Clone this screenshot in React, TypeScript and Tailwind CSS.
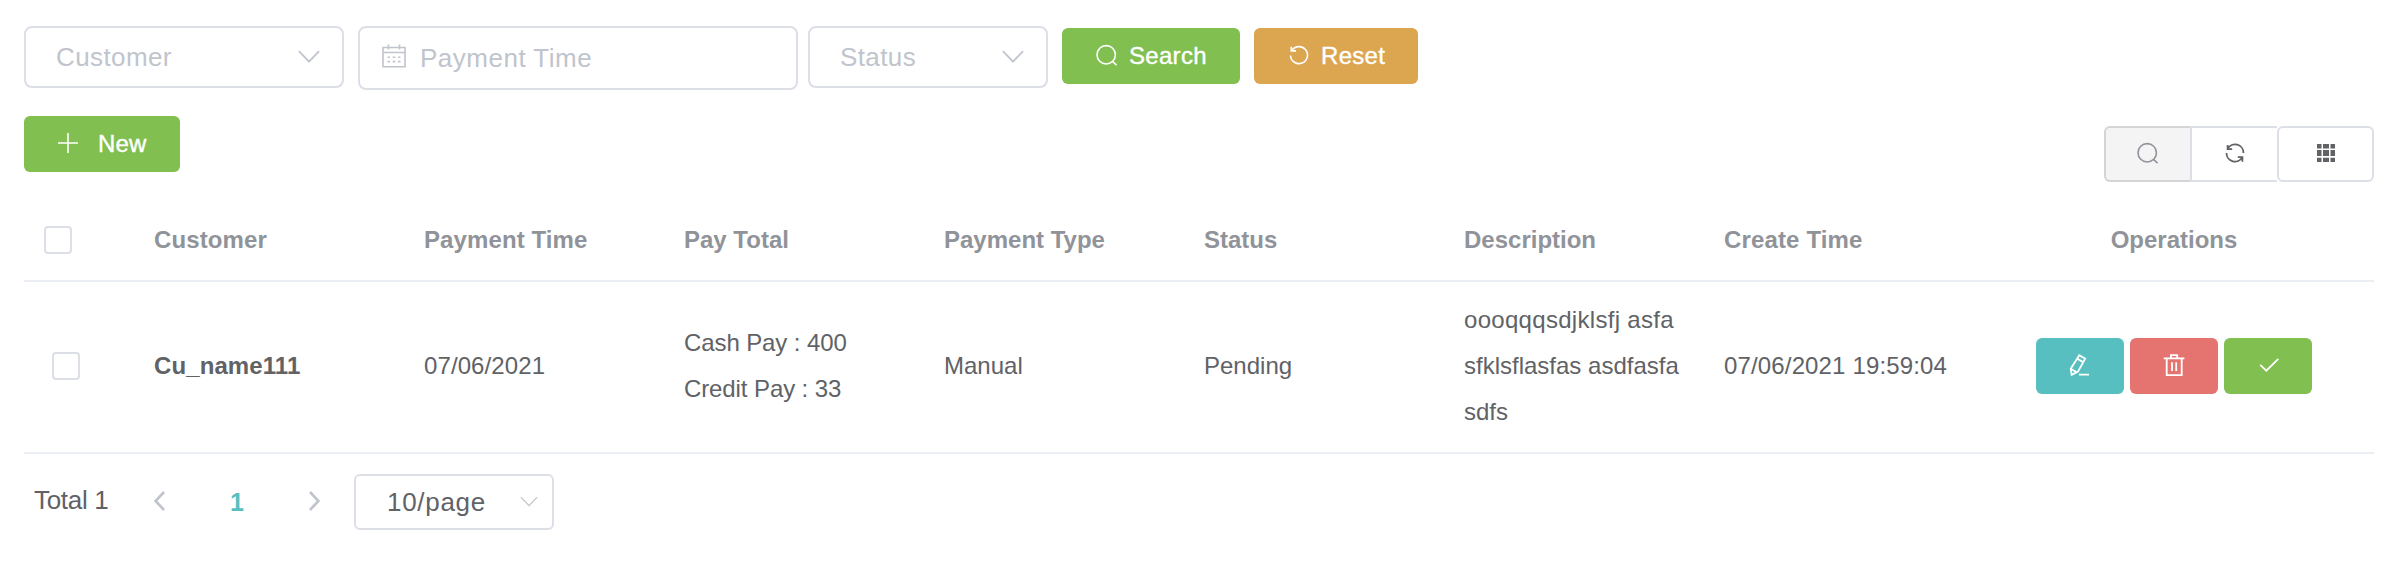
import React from "react";

const Icon = ({ children, size, sw = 1.6, className = "" }: { children: React.ReactNode; size: number; sw?: number; className?: string }) => (
  <svg width={size} height={size} viewBox={`0 0 ${size} ${size}`} fill="none" stroke="currentColor" strokeWidth={sw} className={`shrink-0 overflow-visible ${className}`}>
    {children}
  </svg>
);

const SearchIcon = () => (
  <Icon size={24}>
    <circle cx="11.2" cy="10.8" r="9.2" />
    <path d="M17.4 17.4 21.6 21.2" />
  </Icon>
);

const ChevronDown = ({ w, h, sw }: { w: number; h: number; sw: number }) => (
  <svg width={w} height={h} viewBox="0 0 20 11" fill="none" stroke="currentColor" strokeWidth={sw} strokeLinecap="round" className="-mt-px shrink-0 overflow-visible text-[#c0c4cc]">
    <path d="M0.4 0.6 10 10.6 19.6 0.6" />
  </svg>
);

const Select = ({ label, className }: { label: string; className: string }) => (
  <div className={`flex h-[62px] items-center justify-between rounded-lg border-2 border-[#dcdfe6] pl-[30px] pr-[23px] text-[26px] tracking-[0.4px] text-[#c0c4cc] ${className}`}>
    <span>{label}</span>
    <ChevronDown w={20} h={11} sw={1.8} />
  </div>
);

const Checkbox = ({ className }: { className: string }) => (
  <div className={`size-7 rounded-[4px] border-2 border-[#dcdfe6] bg-white ${className}`} />
);

const medium = "[-webkit-text-stroke:0.4px_currentColor]";
const columns = "grid grid-cols-[110px_270px_260px_260px_260px_260px_260px_260px_1fr] items-center";

export default function App() {
  return (
    <div className="h-[572px] w-[2396px] overflow-hidden bg-white pl-6 pr-[22px] pt-[26px] font-['Liberation_Sans',Arial,sans-serif] text-[24px] text-[#606266]">
      <div className="flex h-[90px] items-start">
        <Select label="Customer" className="w-[320px]" />
        <div className="ml-[14px] flex h-16 w-[440px] items-center rounded-lg border-2 border-[#dcdfe6] pl-[22px] text-[26px] tracking-[0.5px] text-[#c0c4cc]">
          <Icon size={24} sw={1.6} className="-mt-[4px]">
            <path d="M1 3.5H23V22.7H1ZM1 8.5H23M6.5 0.5V5.5M17.5 0.5V5.5" />
            <path d="M5.5 13.3H8M10.7 13.3H13.3M16 13.3H18.5M5.5 17.6H8M10.7 17.6H13.3M16 17.6H18.5" />
          </Icon>
          <span className="ml-[14px]">Payment Time</span>
        </div>
        <Select label="Status" className="ml-[10px] w-[240px]" />
        <button className={`ml-[14px] mt-[2px] flex h-14 w-[178px] items-center rounded-md bg-[#80bf50] pl-[33px] text-white ${medium}`}>
          <SearchIcon />
          <span className="ml-[10px] tracking-[0.3px]">Search</span>
        </button>
        <button className={`ml-[14px] mt-[2px] flex h-14 w-[164px] items-center rounded-md bg-[#dca550] pl-[33px] text-white ${medium}`}>
          <Icon size={24} className="-mt-px">
            <path d="M4.6 6.9A8.5 8.5 0 1 1 3.5 11.5M4.3 2.8V6.9H9" />
          </Icon>
          <span className="ml-[10px] tracking-[0.3px]">Reset</span>
        </button>
      </div>

      <div className="flex h-[84px] items-start justify-between">
        <button className={`flex h-14 w-[156px] items-center rounded-md bg-[#80bf50] pl-[34px] text-white ${medium}`}>
          <Icon size={20} sw={1.6} className="-mt-[2px]">
            <path d="M0 10H20M10 0V20" />
          </Icon>
          <span className="ml-[20px] tracking-[0.2px]">New</span>
        </button>
        <div className="mt-[10px] flex h-14">
          <button className="flex w-[86px] items-center justify-center rounded-l-md border-2 border-r-0 border-[#d3d4d6] bg-[#f4f4f5] text-[#909399]">
            <SearchIcon />
          </button>
          <button className="flex w-[87px] items-center justify-center border-2 border-r-0 border-[#dcdfe6] text-[#606266]">
            <Icon size={20} sw={1.8}>
              <path d="M2.7 4.9A8.4 8.4 0 0 1 18.5 9M17.3 13.1A8.4 8.4 0 0 1 1.5 9M2.6 0.9V5.1H7.2M17.4 17.7V13.1H12.8" />
            </Icon>
          </button>
          <button className="flex w-[97px] items-center justify-center rounded-l-[6px] rounded-r-md border-2 border-[#dcdfe6] text-[#606266]">
            <svg width="18" height="18" viewBox="0 0 18 18" fill="currentColor" className="-mt-[2px]">
              <path d="M0 0h4.5v4.5H0zM6 0h6v4.5H6zM13.5 0h4.5v4.5h-4.5zM0 6.1h4.5v6H0zM6 6.1h6v6H6zM13.5 6.1h4.5v6h-4.5zM0 13.8h4.5v4.2H0zM6 13.8h6v4.2H6zM13.5 13.8h4.5v4.2h-4.5z" />
            </svg>
          </button>
        </div>
      </div>

      <div className={`${columns} h-[82px] border-b-2 border-[#ebeef5] font-bold text-[#909399]`}>
        <Checkbox className="ml-5" />
        <span className="pl-5 tracking-[0.1px]">Customer</span>
        <span className="pl-5 tracking-[0.1px]">Payment Time</span>
        <span className="pl-5">Pay Total</span>
        <span className="pl-5">Payment Type</span>
        <span className="pl-5">Status</span>
        <span className="pl-5">Description</span>
        <span className="pl-5 tracking-[0.15px]">Create Time</span>
        <span className="pl-[10px] text-center">Operations</span>
      </div>

      <div className={`${columns} h-[172px] border-b-2 border-[#ebeef5] pb-[2px] leading-[46px]`}>
        <Checkbox className="ml-7" />
        <span className="pl-5 font-bold tracking-[0.1px]">Cu_name111</span>
        <span className="pl-5 tracking-[0.1px]">07/06/2021</span>
        <div className="pl-5 tracking-[-0.1px]">
          <div>Cash Pay : 400</div>
          <div>Credit Pay : 33</div>
        </div>
        <span className="pl-5">Manual</span>
        <span className="pl-5">Pending</span>
        <div className="whitespace-nowrap pl-5">
          <div className="tracking-[0.3px]">oooqqqsdjklsfj asfa</div>
          <div>sfklsflasfas asdfasfa</div>
          <div>sdfs</div>
        </div>
        <span className="whitespace-nowrap pl-5 tracking-[0.15px]">07/06/2021 19:59:04</span>
        <div className="flex justify-center gap-[6px] pl-[10px] text-white">
          <button className="flex h-14 w-[88px] items-center justify-center rounded-md bg-[#58bfc1]">
            <Icon size={24} sw={1.8}>
              <path d="M11.3 1.2 17.2 4.6 10 17.6 3.7 20.8 2.7 14.8ZM9.3 4.7 15.2 8.1M2.7 14.8 8.8 18.2M11 20.7H21" />
            </Icon>
          </button>
          <button className="flex h-14 w-[88px] items-center justify-center rounded-md bg-[#e57470]">
            <Icon size={24} sw={1.8}>
              <path d="M1.7 4.3H22.4M4.7 4.3V21.2H19.7V4.3M8.9 4.3V1.2H15.2V4.3M10 8.2V17M14.2 8.2V17" />
            </Icon>
          </button>
          <button className="flex h-14 w-[88px] items-center justify-center rounded-md bg-[#80bf50]">
            <Icon size={24} sw={1.8}>
              <path d="M4.3 10.9 10.3 16.7 22.3 4.9" />
            </Icon>
          </button>
        </div>
      </div>

      <div className="mt-5 flex h-14 items-center pl-[10px] text-[26px]">
        <span className="-mt-[3px] w-[120px] tracking-[-0.3px]">Total 1</span>
        <svg width="11" height="20" viewBox="0 0 11 20" fill="none" stroke="currentColor" strokeWidth="2.6" className="-mt-[2px] text-[#c0c4cc]">
          <path d="M10 1 1.6 10 10 19" />
        </svg>
        <span className="ml-[65px] mt-[2px] w-[79px] text-[25px] font-bold text-[#58bfc1]">1</span>
        <svg width="11" height="20" viewBox="0 0 11 20" fill="none" stroke="currentColor" strokeWidth="2.6" className="-mt-[2px] text-[#c0c4cc]">
          <path d="M1 1 9.4 10 1 19" />
        </svg>
        <div className="ml-[34px] flex h-14 w-[200px] items-center justify-between rounded-md border-2 border-[#dcdfe6] pl-[31px] pr-[15px] tracking-[0.7px]">
          <span className="mt-px">10/page</span>
          <ChevronDown w={16} h={9} sw={1.6} />
        </div>
      </div>
    </div>
  );
}
